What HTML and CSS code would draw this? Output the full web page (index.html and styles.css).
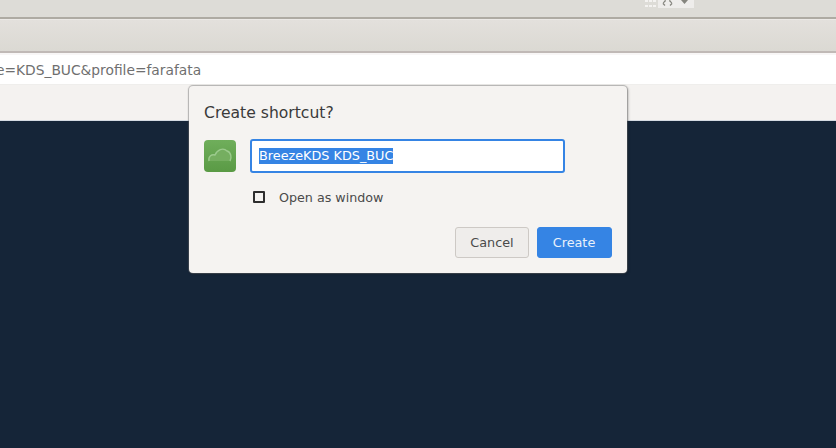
FILE: index.html
```html
<!DOCTYPE html>
<html lang="en">
<head>
<meta charset="utf-8">
<title>Create shortcut?</title>
<link rel="stylesheet" href="styles.css">
</head>
<body>
<div class="titlebar">
  <div class="tray">
    <svg class="grid" width="12" height="8" viewBox="0 0 12 8"><path d="M0 0h3v2H0zM4 0h3v2H4zM8 0h3v2H8zM0 5h3v2H0zM4 5h3v2H4zM8 5h3v2H8z" fill="#f4f3f1"/></svg>
    <div class="traybox">
      <svg width="11" height="6" viewBox="0 0 11 6"><path d="M1 3.5L3 .8H4M10 3.5L8 .8H7M1 3.5L3 5.5M10 3.5L8 5.5" fill="none" stroke="#85857e" stroke-width="1.2"/></svg>
      <svg width="7" height="5" viewBox="0 0 7 5"><path d="M0 0H7L3.5 4Z" fill="#85857e"/></svg>
    </div>
  </div>
</div>
<div class="toolbar"></div>
<div class="urlbar"><span class="url">e=KDS_BUC&amp;profile=farafata</span></div>
<div class="pagehead"></div>
<div class="pagebody"></div>
<div class="dialog">
  <h1 class="title">Create shortcut?</h1>
  <div class="namerow">
    <svg class="appicon" width="32" height="32" viewBox="0 0 32 32">
      <defs>
        <linearGradient id="g" x1="0" y1="0" x2="0" y2="1"><stop offset="0" stop-color="#6fae5b"/><stop offset="1" stop-color="#5a9a45"/></linearGradient>
        <filter id="soft" x="-20%" y="-20%" width="140%" height="140%"><feGaussianBlur stdDeviation="0.7"/></filter>
      </defs>
      <rect width="32" height="32" rx="4" fill="url(#g)"/>
      <g filter="url(#soft)">
        <path d="M5 21C4 16 8 14 11 15C13 10 19 7 23 11C27 12 28 18 26 21Z" fill="#74ae61"/>
        <path d="M5 21C4 16 8 14 11 15C13 10 19 7 23 11C27 12 28 18 26 21" fill="none" stroke="#9ccb8d" stroke-width="1.4"/>
      </g>
    </svg>
    <div class="field"><span class="selected">BreezeKDS KDS_BUC</span></div>
  </div>
  <div class="checkrow">
    <span class="check"></span>
    <span class="checklabel">Open as window</span>
  </div>
  <div class="actions">
    <button class="btn cancel" type="button">Cancel</button>
    <button class="btn create" type="button">Create</button>
  </div>
</div>
</body>
</html>
```
FILE: styles.css
```css
html, body {
  margin: 0;
  height: 100%;
}
body {
  display: flex;
  flex-direction: column;
  width: 836px;
  height: 448px;
  overflow: hidden;
  position: relative;
  font-family: "DejaVu Sans", sans-serif;
  background: #152538;
}
.titlebar {
  height: 17px;
  flex: none;
  background: #dddcd7;
  border-bottom: 2px solid #aeaba3;
  display: flex;
  justify-content: flex-end;
  align-items: flex-start;
  padding-right: 142px;
}
.tray {
  display: flex;
  align-items: flex-start;
}
.grid {
  display: block;
  margin-right: 1px;
}
.traybox {
  width: 36px;
  height: 8px;
  background: #eeedeb;
  display: flex;
  justify-content: flex-start;
  gap: 8px;
  align-items: flex-start;
  padding-left: 4px;
  box-sizing: border-box;
}
.toolbar {
  height: 31px;
  flex: none;
  background: linear-gradient(#e3e0dc, #dbd9d3);
  border-top: 1px solid #ebe9e6;
  border-bottom: 2px solid #c0b9b6;
}
.urlbar {
  height: 29px;
  flex: none;
  background: #fff;
  color: #6f6f6f;
  font-size: 13.8px;
  line-height: 31px;
  border-top: 2px solid #f8f6f6;
  overflow: hidden;
  white-space: nowrap;
  display: flex;
}
.url {
  margin-left: -4px;
}
.pagehead {
  height: 37px;
  flex: none;
  background: #f4f2f0;
  border-top: 1px solid #efeeec;
  box-sizing: border-box;
  border-bottom: 1px solid #d5dbe2;
}
.pagebody {
  flex: 1;
  background: #152538;
}
.dialog {
  position: absolute;
  left: 189px;
  top: 86px;
  width: 438px;
  height: 187px;
  box-sizing: border-box;
  padding: 17px 15px 15px 15px;
  background: #f5f3f1;
  border-radius: 4px;
  box-shadow: 0 0 1px 1px rgba(110, 110, 110, 0.45), 1px 1px 3px rgba(0, 0, 0, 0.3);
  display: flex;
  flex-direction: column;
}
.title {
  margin: 0;
  font-size: 15.6px;
  font-weight: normal;
  line-height: 20px;
  color: #3a3a3a;
}
.namerow {
  display: flex;
  align-items: center;
  gap: 14px;
  margin-top: 16px;
}
.appicon {
  flex: none;
  display: block;
}
.field {
  width: 315px;
  height: 34px;
  box-sizing: border-box;
  border: 2px solid #3584e4;
  border-radius: 3px;
  background: #fff;
  padding-left: 7px;
  display: flex;
  align-items: center;
  font-size: 12.8px;
}
.selected {
  background: #3584e4;
  color: #fff;
  line-height: 16px;
}
.checkrow {
  display: flex;
  align-items: center;
  margin-top: 14px;
  margin-left: 49px;
  height: 20px;
}
.check {
  width: 12px;
  height: 12px;
  box-sizing: border-box;
  border: 2px solid #2e2e2e;
  border-radius: 1px;
  flex: none;
}
.checklabel {
  margin-left: 14px;
  font-size: 12.7px;
  color: #4a4a4a;
}
.actions {
  display: flex;
  justify-content: flex-end;
  gap: 8px;
  margin-top: auto;
}
.btn {
  height: 31px;
  box-sizing: border-box;
  border-radius: 3px;
  font-family: "DejaVu Sans", sans-serif;
  font-size: 12.8px;
  padding: 0;
}
.cancel {
  width: 74px;
  background: #efedeb;
  border: 1px solid #cdc9c5;
  color: #4a4a4a;
}
.create {
  width: 75px;
  padding-right: 1px;
  background: #3584e4;
  border: 1px solid #3584e4;
  color: #e9f1fb;
}
```
